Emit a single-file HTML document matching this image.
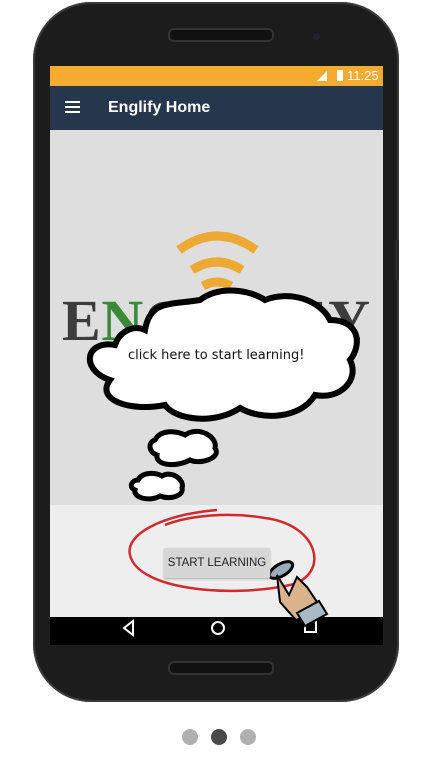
<!DOCTYPE html><html><head><style>
body{margin:0;width:432px;height:768px;background:#fff;position:relative;overflow:hidden;font-family:"Liberation Sans",sans-serif}
.abs{position:absolute}
</style></head><body>
<div class="abs" style="left:33px;top:2px;width:366px;height:700px;background:#1c1c1c;border-radius:58px;box-shadow:inset 0 0 0 2px #3a3a3a"></div>
<div class="abs" style="left:395px;top:240px;width:4px;height:40px;background:#2a2a2a"></div>
<div class="abs" style="left:168px;top:28px;width:102px;height:10px;border-radius:6px;background:#111;border:2px solid #333"></div>
<div class="abs" style="left:313px;top:33px;width:7px;height:7px;border-radius:50%;background:#223"></div>
<div class="abs" style="left:168px;top:661px;width:102px;height:10px;border-radius:6px;background:#111;border:2px solid #333"></div>
<div class="abs" style="left:50px;top:66px;width:333px;height:20px;background:#f4ab2f"></div>
<div class="abs" style="left:347px;top:68px;color:#fff;font-size:13px">11:25</div>
<div class="abs" style="left:337px;top:70px;width:6px;height:11px;background:#fff"></div>
<div class="abs" style="left:317px;top:71px;width:0;height:0;border-left:10px solid transparent;border-bottom:10px solid #fff"></div>
<div class="abs" style="left:50px;top:86px;width:333px;height:44px;background:#25364d"></div>
<div class="abs" style="left:65px;top:101px;width:15px;height:2px;background:#fff;box-shadow:0 5px #fff,0 10px #fff"></div>
<div class="abs" style="left:108px;top:99px;color:#fff;font-size:16px;font-weight:bold">Englify Home</div>
<div class="abs" style="left:50px;top:130px;width:333px;height:375px;background:#dedede"></div>
<div class="abs" style="left:50px;top:505px;width:333px;height:112px;background:#eeeeee"></div>
<div class="abs" style="left:50px;top:617px;width:333px;height:28px;background:#000"></div>
<svg class="abs" style="left:0;top:0" width="432" height="768">
<g fill="none" stroke="#eda934" stroke-width="9">
<path d="M179 250 Q217 222 256 250"/><path d="M192 270 Q217 254 242 270"/><path d="M203 286 Q217 278 231 286"/>
</g>
<text x="62" y="340" font-family="Liberation Serif" font-weight="bold" font-size="58" fill="#3c3c3c" textLength="308">E<tspan fill="#3a8a3a">N</tspan>GLIFEY</text>
<path d="M145 330 C150 300 170 305 200 300 C220 285 250 290 265 300 C290 290 320 300 330 320 C360 320 362 345 350 360 C360 380 340 400 315 395 C300 420 260 420 240 408 C215 425 175 420 165 405 C130 412 95 400 110 380 C80 370 85 340 115 345 C120 330 135 325 145 330Z" fill="#fff" stroke="#000" stroke-width="6"/>
<path d="M155 440 C160 430 175 430 185 435 C200 425 218 438 215 448 C222 458 200 465 190 460 C175 468 155 465 157 455 C148 452 148 442 155 440Z" fill="#fff" stroke="#000" stroke-width="5"/>
<path d="M138 480 C142 472 155 472 162 476 C172 470 185 480 182 488 C184 496 170 500 160 496 C150 502 133 498 135 490 C128 487 132 480 138 480Z" fill="#fff" stroke="#000" stroke-width="5"/>
<g fill="none" stroke="#d02a30" stroke-width="2.5">
<path d="M217 510 C160 515 125 535 130 555 C138 590 230 598 290 585 C330 575 320 525 265 518 C230 512 190 515 165 525"/>
</g>
<path d="M124 628 l9 -7 v14z" fill="none" stroke="#fff" stroke-width="2"/>
<circle cx="218" cy="628" r="6" fill="none" stroke="#fff" stroke-width="2"/>
<rect x="305" y="621" width="11" height="11" fill="none" stroke="#fff" stroke-width="2"/>
<ellipse cx="281" cy="570" rx="13" ry="6" fill="#9ab" stroke="#000" stroke-width="3" transform="rotate(-30 281 570)"/>
<path d="M277 575 l12 20 l8 -18 l10 10 l10 15 l-6 12 l-15 6 l-16 -18 z" fill="#d9b38c" stroke="#000" stroke-width="2"/>
<path d="M297 613 l22 -12 l8 13 l-22 12z" fill="#a8b8c4" stroke="#000" stroke-width="2"/>
<circle cx="190" cy="737" r="8" fill="#b0b0b0"/><circle cx="219" cy="737" r="8" fill="#4a4a4a"/><circle cx="248" cy="737" r="8" fill="#b0b0b0"/>
</svg>
<div class="abs" style="left:128px;top:348px;font-family:'DejaVu Sans',sans-serif;font-size:13px;color:#111">click here to start learning!</div>
<div class="abs" style="left:164px;top:548px;width:106px;height:30px;background:#d6d6d6;border-radius:2px;box-shadow:0 1px 2px #aaa;font-size:11.5px;line-height:30px;text-align:center;color:#222">START LEARNING</div>
</body></html>
